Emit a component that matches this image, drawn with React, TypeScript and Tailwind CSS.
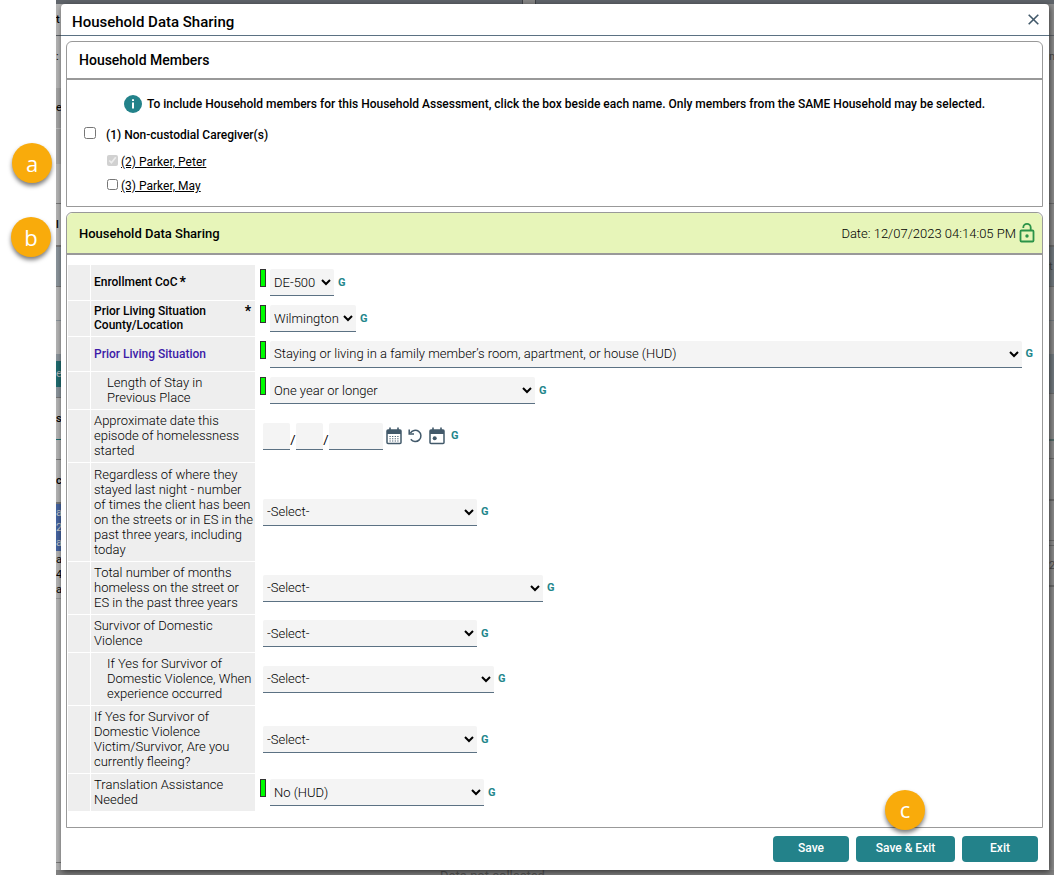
import React, { useState } from "react";

interface Field {
  id: string;
  label: string;
  value?: string;
  required?: boolean;
  bold?: boolean;
  link?: boolean;
  indent?: boolean;
  flagged?: boolean;
  date?: boolean;
  rowHeight?: string;
  width?: string;
}

interface Segment {
  size: string;
  text?: string;
}

// --- Fields of the assessment, in display order ---
const fields: Field[] = [
  { id: "coc", label: "Enrollment CoC", value: "DE-500", required: true, bold: true, flagged: true, rowHeight: "h-[35px]", width: "w-16" },
  { id: "county", label: "Prior Living Situation County/Location", value: "Wilmington", required: true, bold: true, flagged: true, rowHeight: "h-[35px]", width: "w-[86px]" },
  { id: "prior", label: "Prior Living Situation", value: "Staying or living in a family member’s room, apartment, or house (HUD)", bold: true, link: true, flagged: true, rowHeight: "h-[34px]", width: "flex-1" },
  { id: "stay", label: "Length of Stay in Previous Place", value: "One year or longer", indent: true, flagged: true, width: "w-[265px]" },
  { id: "started", label: "Approximate date this episode of homelessness started", date: true },
  { id: "times", label: "Regardless of where they stayed last night - number of times the client has been on the streets or in ES in the past three years, including today", value: "-Select-", rowHeight: "h-[98px]", width: "w-[214px]" },
  { id: "months", label: "Total number of months homeless on the street or ES in the past three years", value: "-Select-", width: "w-[280px]" },
  { id: "survivor", label: "Survivor of Domestic Violence", value: "-Select-", width: "w-[214px]" },
  { id: "when", label: "If Yes for Survivor of Domestic Violence, When experience occurred", value: "-Select-", indent: true, width: "w-[231px]" },
  { id: "fleeing", label: "If Yes for Survivor of Domestic Violence Victim/Survivor, Are you currently fleeing?", value: "-Select-", width: "w-[214px]" },
  { id: "translation", label: "Translation Assistance Needed", value: "No (HUD)", flagged: true, width: "w-[214px]" },
];

// --- Page edges that stay visible around the dialog ---
const leftEdge: Segment[] = [
  { size: "h-8 border-b border-[#555b60] font-medium", text: "t" },
  { size: "h-[42px]", text: ":" },
  { size: "h-[10px]" },
  { size: "h-10 bg-[#a3a3a3]", text: "e" },
  { size: "h-9 bg-[#a3a3a3] border-t border-[#bbbbbb]" },
  { size: "h-10 border-b border-[#777777]" },
  { size: "h-[43px] border-b-2 border-[#777777] font-medium", text: "l" },
  { size: "h-10 bg-[#8b949b] border-b border-[#777777]" },
  { size: "h-[34px] border-b border-[#8b949b]" },
  { size: "h-[33px]" },
  { size: "h-[7px] bg-[#8b949b]" },
  { size: "h-[26px] bg-[#1f6a6e] text-[#b4b4b4]", text: "e" },
  { size: "h-[11px] bg-[#8b949b] border-b border-[#777777]" },
  { size: "h-[42px] border-b border-[#1f6a6e] font-medium", text: "s" },
  { size: "h-5 border-b border-[#777777]" },
  { size: "h-11 border-b-2 border-[#777777] font-medium", text: "c" },
  { size: "h-[17px] bg-[#45639f] text-[#c8c8c8]", text: "a" },
  { size: "h-[13px] bg-[#45639f] text-[#c8c8c8]", text: "2" },
  { size: "h-[17px] bg-[#45639f] text-[#c8c8c8]", text: "a" },
  { size: "h-[18px]", text: "a" },
  { size: "h-3", text: "4" },
  { size: "h-[18px] border-b border-[#999999]", text: "a" },
  { size: "flex-1" },
  { size: "h-2 border-t border-[#777777]" },
];

const rightEdge: Segment[] = [
  { size: "h-8 border-b border-[#5f646a]" },
  { size: "h-[42px] text-[#4d4d4d]", text: "m" },
  { size: "h-[126px] border-b border-[#6e6e6e]" },
  { size: "h-[43px] border-b-2 border-[#6e6e6e]" },
  { size: "h-10 bg-[#757d83] border-b border-[#6e6e6e] text-[#4d4d4d]", text: "t" },
  { size: "h-[34px] border-b border-[#757d83]" },
  { size: "h-[33px]" },
  { size: "h-10 bg-[#757d83] border-b border-[#6e6e6e]" },
  { size: "h-[47px] border-b-2 border-[#566f6c]" },
  { size: "h-[18px] border-b border-[#6e6e6e]" },
  { size: "h-[42px] border-b-2 border-[#6e6e6e]" },
  { size: "h-10 border-b border-[#6e6e6e]" },
  { size: "h-[5px] border-b border-[#6e6e6e]" },
  { size: "h-[41px] border-b-2 border-[#6e6e6e] text-[#4d4d4d]", text: "2" },
  { size: "flex-1" },
];

function Edge({ segments }: { segments: Segment[] }) {
  return (
    <div className="flex w-[5px] shrink-0 flex-col overflow-hidden" aria-hidden="true">
      {segments.map((s, i) => (
        <div key={i} className={`flex shrink-0 items-center text-[11px] leading-3 ${s.size}`}>
          {s.text}
        </div>
      ))}
    </div>
  );
}

function Callout({ letter, position }: { letter: string; position: string }) {
  return (
    <div
      className={`absolute z-20 flex size-10 items-center justify-center rounded-full bg-[#f9ab0b] font-['Open_Sans',sans-serif] text-[22px] text-white shadow-[0_3px_4px_rgba(0,0,0,0.5)] ${position}`}
    >
      {letter}
    </div>
  );
}

function CalendarIcon({ today }: { today?: boolean }) {
  return (
    <svg width="16" height="18" viewBox="0 0 16 18" fill="none">
      <path d="M4 0.5V4M12 0.5V4" stroke="#42596a" strokeWidth="1.6" />
      <rect x="1" y="3" width="14" height="13.5" rx="1" stroke="#42596a" strokeWidth="1.5" />
      <path d="M1 3h14v4H1z" fill="#42596a" />
      {today ? (
        <circle cx="5.7" cy="11.3" r="2" fill="#42596a" />
      ) : (
        <path
          d="M3.5 9.5h9M3.5 11.8h9M3.5 14h9"
          stroke="#42596a"
          strokeWidth="1.1"
          strokeDasharray="1.2 1.4"
        />
      )}
    </svg>
  );
}

function UndoIcon() {
  return (
    <svg width="15" height="14" viewBox="0 0 15 14" fill="none" stroke="#42596a" strokeWidth="1.5">
      <path d="M2.4 4.2A5.6 5.6 0 1 1 2.8 10.2" />
      <path d="M1.2 0.5V5H6" />
    </svg>
  );
}

function UnlockIcon() {
  return (
    <svg width="16" height="20" viewBox="0 0 16 20" fill="none" stroke="#2b9348" strokeWidth="1.8">
      <rect x="1.5" y="7.5" width="13" height="11" rx="1" />
      <path d="M4.3 5V4.6a3.7 3.7 0 0 1 7.4 0V7.5" />
      <circle cx="8" cy="13" r="1.7" fill="#2b9348" stroke="none" />
    </svg>
  );
}

function DateInputs() {
  const box = "h-[27px] rounded-t-xs border-b border-[#5b7183] bg-[#f4f4f4] px-1";
  return (
    <div className="flex items-end">
      <input aria-label="Month" className={`w-[27px] ${box}`} />
      <span className="w-1.5 text-center">/</span>
      <input aria-label="Day" className={`w-[27px] ${box}`} />
      <span className="w-1.5 text-center">/</span>
      <input aria-label="Year" className={`w-[54px] ${box}`} />
      <div className="flex items-center gap-1.5 self-center pl-[3px]">
        <button type="button" aria-label="Open calendar">
          <CalendarIcon />
        </button>
        <button type="button" aria-label="Restore date">
          <UndoIcon />
        </button>
        <button type="button" aria-label="Today">
          <CalendarIcon today />
        </button>
      </div>
    </div>
  );
}

function FieldRow({ field }: { field: Field }) {
  return (
    <tr className={field.rowHeight}>
      <td className="w-[22px] bg-[#eeeeee]" />
      <th
        scope="row"
        className={`w-[164px] bg-[#eeeeee] pt-[3px] pb-1 text-left ${field.indent ? "pl-4" : "pl-[3px]"} ${
          field.bold ? "pr-1 text-xs leading-[14px] font-medium" : "pr-px text-[13px] leading-[15px] font-light"
        }`}
      >
        <div className={`flex ${field.id === "county" ? "justify-between" : "gap-0.5"}`}>
          {field.link ? (
            <a href="#prior" className="text-[#3c1ba8]">
              {field.label}
            </a>
          ) : (
            <label htmlFor={field.date ? undefined : field.id}>{field.label}</label>
          )}
          {field.required && <span className="text-sm leading-[14px] font-bold">*</span>}
        </div>
      </th>
      <td className={`pr-2 ${field.flagged ? "pl-1" : "pl-[7px]"}`}>
        <div className="flex items-center">
          {field.flagged && (
            <span className="mr-1 h-[18px] w-1.5 shrink-0 self-start border border-[#333333] bg-[#00ff00]" />
          )}
          {field.date ? (
            <DateInputs />
          ) : (
            <select
              id={field.id}
              aria-label={field.label}
              className={`h-[27px] rounded-t-xs border-b border-[#5b7183] bg-[#f4f4f4] text-[13px] font-light ${field.width}`}
            >
              <option>{field.value}</option>
            </select>
          )}
          <span className={`pt-px text-[11px] font-bold text-[#23868b] ${field.date ? "pl-1.5" : "pl-1"}`}>G</span>
        </div>
      </td>
    </tr>
  );
}

export default function App() {
  const [caregivers, setCaregivers] = useState(false);
  const [may, setMay] = useState(false);

  return (
    <div className="relative flex min-h-screen bg-white pl-14 font-['Roboto',sans-serif] text-[13px] text-black">
      <Callout letter="a" position="top-[143px] left-3" />
      <Callout letter="b" position="top-[217px] left-[11px]" />

      <div className="flex flex-1 flex-col bg-[#5f646a]">
        <div className="flex h-1 shrink-0 justify-center pr-[52px]" aria-hidden="true">
          <div className="w-3.5 border-x border-[#3f4246] bg-[#858585]" />
        </div>
        <div className="flex flex-1 bg-[linear-gradient(to_right,#b4b4b4_50%,#8f8f8f_50%)]">
          <Edge segments={leftEdge} />

          <div
            role="dialog"
            aria-labelledby="dialog-title"
            className="relative z-10 flex flex-1 flex-col rounded-t bg-white shadow-[1px_2px_6px_rgba(0,0,0,0.6)]"
          >
            <div className="flex h-8 items-center justify-between border-b border-[#5b7183] pr-2.5 pl-[11px]">
              <h1 id="dialog-title" className="pt-1.5 text-[15px] font-medium">
                Household Data Sharing
              </h1>
              <button type="button" aria-label="Close">
                <svg width="11" height="11" viewBox="0 0 11 11" stroke="#42596a" strokeWidth="1.6">
                  <path d="M0.7 0.7l9.6 9.6M10.3 0.7L0.7 10.3" />
                </svg>
              </button>
            </div>

            <div className="flex flex-1 flex-col gap-[5px] pt-[5px] pr-1.5 pl-[5px]">
              {/* Household members */}
              <section className="h-[166px] rounded-t-md border border-[#999999]">
                <h2 className="flex h-[38px] items-center border-b-2 border-[#999999] px-3 text-sm font-medium">
                  Household Members
                </h2>
                <div className="flex items-center justify-center gap-[5px] pt-[15px]">
                  <svg width="18" height="18" viewBox="0 0 18 18">
                    <circle cx="9" cy="9" r="9" fill="#23828a" />
                    <path d="M8 7.5h2v6H8zM8 4.2h2v1.9H8z" fill="white" />
                  </svg>
                  <p className="text-xs leading-[18px] font-medium">
                    To include Household members for this Household Assessment, click the box beside each name. Only
                    members from the SAME Household may be selected.
                  </p>
                </div>
                <label className="flex w-fit items-center pt-[13px] pl-[17px] text-xs leading-[18px] font-medium">
                  <input
                    type="checkbox"
                    checked={caregivers}
                    onChange={(e) => setCaregivers(e.target.checked)}
                    className="mr-2.5 mb-1 size-3"
                  />
                  (1) Non-custodial Caregiver(s)
                </label>
                <div className="flex flex-col gap-1.5 pt-[9px] pl-10 text-xs leading-[18px]">
                  <div className="flex items-center">
                    <input type="checkbox" checked disabled readOnly aria-label="(2) Parker, Peter" className="mr-[3px] mb-1 size-[11px]" />
                    <a href="#peter" className="underline">
                      (2) Parker, Peter
                    </a>
                  </div>
                  <div className="flex items-center">
                    <input
                      type="checkbox"
                      checked={may}
                      onChange={(e) => setMay(e.target.checked)}
                      aria-label="(3) Parker, May"
                      className="mr-[3px] mb-1 size-[11px]"
                    />
                    <a href="#may" className="underline">
                      (3) Parker, May
                    </a>
                  </div>
                </div>
              </section>

              {/* Household data sharing */}
              <section className="rounded-t-md border border-[#999999]">
                <div className="flex h-[42px] items-center justify-between rounded-t-md border-b-2 border-[#999999] bg-[#e7f5b9] pr-[7px] pl-3">
                  <h2 className="pt-0.5 text-[13px] font-medium">Household Data Sharing</h2>
                  <div className="flex items-center gap-[3px]">
                    <span className="pt-0.5 font-light">Date: 12/07/2023 04:14:05 PM</span>
                    <UnlockIcon />
                  </div>
                </div>
                <table className="mt-[9px] mb-[15px] w-full border-separate border-spacing-px">
                  <tbody>
                    {fields.map((field) => (
                      <FieldRow key={field.id} field={field} />
                    ))}
                  </tbody>
                </table>
              </section>
            </div>

            <div className="flex justify-end gap-[7px] pt-2 pr-[11px] pb-2 text-xs font-medium text-white">
              <button type="button" className="h-[26px] w-[76px] rounded bg-[#23828a] pb-0.5">
                Save
              </button>
              <div className="relative">
                <Callout letter="c" position="bottom-8 left-[29px]" />
                <button type="button" className="h-[26px] w-[99px] rounded bg-[#23828a] pb-0.5">
                  Save &amp; Exit
                </button>
              </div>
              <button type="button" className="h-[26px] w-[76px] rounded bg-[#23828a] pb-0.5">
                Exit
              </button>
            </div>
          </div>

          <Edge segments={rightEdge} />
        </div>
        <div className="h-[5px] shrink-0 overflow-hidden bg-[#828282] pl-96 text-[#565656]" aria-hidden="true">
          <span className="block leading-3">Data not collected</span>
        </div>
      </div>
    </div>
  );
}
